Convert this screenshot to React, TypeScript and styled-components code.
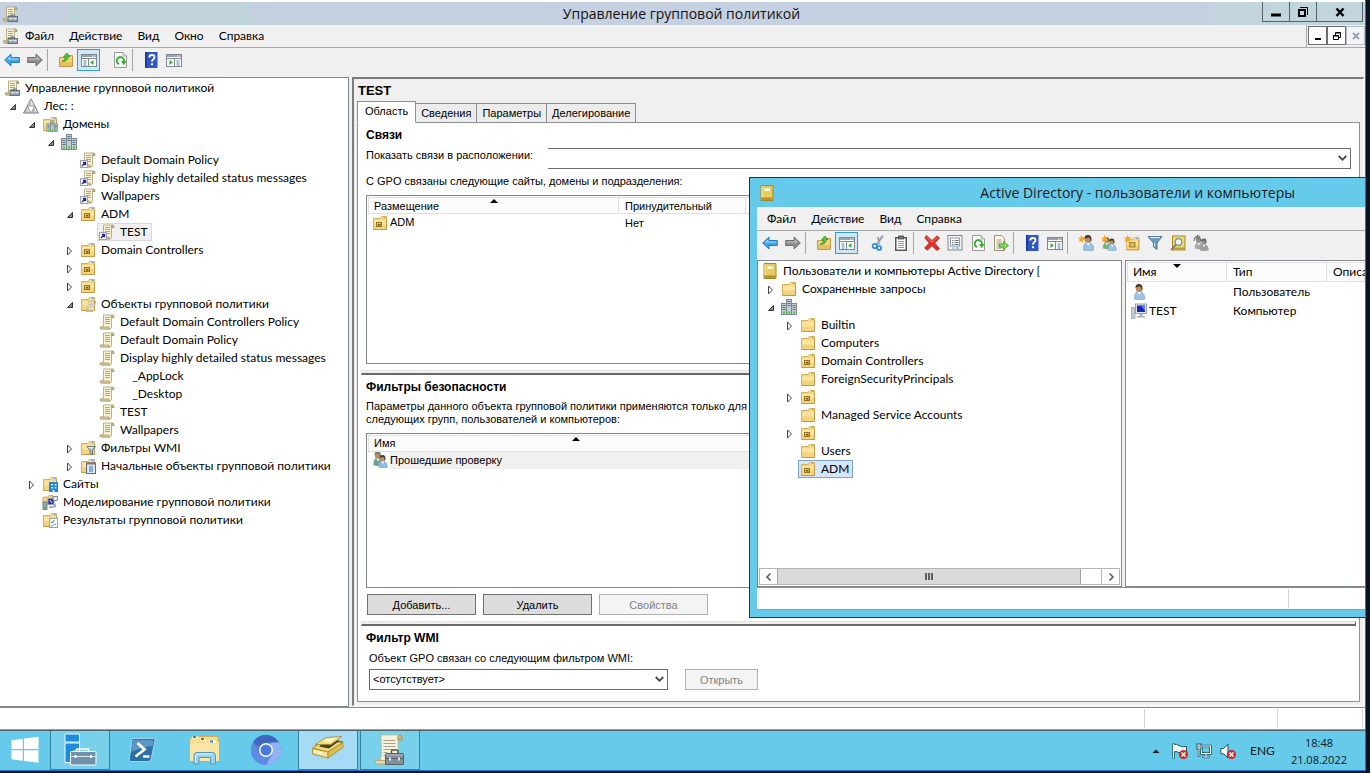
import React from 'react';
import styled, { createGlobalStyle, css } from 'styled-components';

const SEGOE = `Lato, 'Noto Sans', sans-serif`;
const SANS = `'Liberation Sans', Arial, sans-serif`;
const BLUE = '#66caea';

const Global = createGlobalStyle`
  *, *::before, *::after { box-sizing: border-box; }
  body { margin: 0; background: #0b1322; }
  button, select { font: inherit; color: inherit; margin: 0; }
`;

/* ---------- icons ---------- */

const Svg = styled.svg`
  display: block;
  flex: none;
`;

function Icon({ size = 16, box = 16, children }: { size?: number; box?: number; children: React.ReactNode }) {
  return (
    <Svg width={size} height={size} viewBox={`0 0 ${box} ${box}`} aria-hidden="true">
      {children}
    </Svg>
  );
}

const scrollShape = (
  <>
    <path d="M4.5 1 H13.5 Q15.3 1.2 14.8 3.500 H12.5 V13 Q12.500 15 10.500 15 H2.500 Q.8 15 1.300 13 H4 L4.500 11 Z" fill="#f8f2d2" stroke="#b3a981" strokeWidth=".9" />
    <path d="M12.500 3.500 Q12 1 13.500 1 Q15.300 1.300 14.800 3.500 Z" fill="#cdbf8a" stroke="#9a8f68" strokeWidth=".7" />
    <path d="M1.300 13 H10 Q9.800 15 11 15 H2.500 Q.8 15 1.300 13Z" fill="#ddd0a0" stroke="#a0946c" strokeWidth=".7" />
    <path d="M6 3.500h5M6 5.500h5M6 7.500h5M6 9.500h5" stroke="#9b98a8" strokeWidth=".9" />
  </>
);

const folderShape = (
  <>
    <path d="M1.500 3.500 H8 L9.500 1.500 H14.500 V14.500 H1.500 Z" fill="#f5d581" stroke="#d8b05c" />
    <path d="M9.500 2.500 H13.500" stroke="#fff4cc" />
    <path d="M11.500 2.500 H13.500" stroke="#5f9fd8" />
    <path d="M2 5 H14 V14 H2 Z" fill="#fbe3a0" />
    <path d="M2 9.500 H14 V14 H2 Z" fill="#f5d27e" />
    <path d="M1.500 14.500 H14.500 V4" stroke="#c39a4a" fill="none" />
  </>
);

const serverShape = (
  <>
    {[
      [0.5, 4.5],
      [10.5, 4.5],
      [5.5, 0.5],
    ].map(([x, y]) => (
      <g key={x}>
        <rect x={x} y={y} width="5" height={15.5 - y} fill="#c3ced6" stroke="#74838d" strokeWidth=".9" />
        <path d={`M${x + 1} ${y + 2}h3M${x + 1} ${y + 4}h3M${x + 1} ${y + 6}h3`} stroke="#56656f" strokeWidth=".9" />
        <rect x={x + 1.5} y="12.500" width="2" height="2" fill="#3bd01f" />
      </g>
    ))}
  </>
);

const GpoIcon = () => <Icon>{scrollShape}</Icon>;
const GpoLinkIcon = () => (
  <Icon>
    {scrollShape}
    <rect x=".5" y="8.500" width="7" height="7" fill="#fff" stroke="#9a9fb2" />
    <path d="M2 14 L5 11 M2.800 10.500 H5.500 V13.200" stroke="#26248c" strokeWidth="1.500" fill="none" />
  </Icon>
);
const toolboxShape = (
  <>
    <path d="M9 10.500 V9 H12.500 V10.500" fill="none" stroke="#5b6772" />
    <rect x="6" y="10.500" width="9.500" height="5" fill="#97a3ae" stroke="#5d6974" strokeWidth=".9" />
    <path d="M6.500 12.500 H15" stroke="#cfd7de" strokeWidth=".9" />
    <path d="M8.500 12v1.500M13 12v1.500" stroke="#eef2f5" />
  </>
);
const GpmcIcon = () => (
  <Icon>
    {scrollShape}
    {toolboxShape}
  </Icon>
);
const ForestIcon = () => (
  <Icon>
    <path d="M8 .8 L15.400 15 H.6 Z" fill="#dcdcdc" stroke="#7b7b7b" />
    <path d="M8 1 L11.700 8 H4.300 Z" fill="#f2f2f2" stroke="#8a8a8a" strokeWidth=".8" />
    <path d="M4.300 8 H11.700 L8 15 Z" fill="#fff" stroke="#8a8a8a" strokeWidth=".8" />
    <path d="M8 1 V8 L4.300 8 Z" fill="#b9b9b9" />
    <path d="M4.300 8.500 V15 H1 Z M11.700 8.500 V15 H8.400 Z" fill="#a9a9a9" opacity=".7" />
  </Icon>
);
const DomainIcon = () => <Icon>{serverShape}</Icon>;
const FolderIcon = () => <Icon>{folderShape}</Icon>;
const OuIcon = () => (
  <Icon>
    {folderShape}
    <rect x="4.500" y="7.500" width="5" height="4" fill="#e8c25a" stroke="#94731f" />
    <path d="M6 9 H8.500 V10.500 H6 Z" fill="#6e5312" />
  </Icon>
);
const DomainsFolderIcon = () => (
  <Icon>
    {folderShape}
    <g transform="translate(4.500 4.500) scale(.72)">{serverShape}</g>
  </Icon>
);
const GpoFolderIcon = () => (
  <Icon>
    {folderShape}
    <g transform="translate(5 4.500) scale(.72)">{scrollShape}</g>
  </Icon>
);
const WmiFolderIcon = () => (
  <Icon>
    {folderShape}
    <path d="M7 6.500 h8.500 l-3 4 v4.500 l-2.500 -1.500 v-3 z" fill="#a9bccb" stroke="#5d7485" strokeWidth=".9" />
    <path d="M8.500 7.800h5" stroke="#fff" />
  </Icon>
);
const StarterFolderIcon = () => (
  <Icon>
    {folderShape}
    <rect x="6.500" y="5" width="9" height="10.500" fill="#dfe9f3" stroke="#4b6b91" />
    <rect x="6" y="4.500" width="10" height="2" fill="#8d6f6a" />
    <path d="M9 9h4M9 11h4M9 13h4" stroke="#3f6aa5" />
  </Icon>
);
const SitesFolderIcon = () => (
  <Icon>
    {folderShape}
    <rect x="7" y="6" width="9" height="10" fill="#1f86cf" />
    <path d="M9 8h2v1.500H9zM12.500 8h2v1.500h-2zM9 11h2v1.500H9zM12.500 11h2v1.500h-2zM10.500 14h2v2h-2z" fill="#bfe4fa" />
  </Icon>
);
const ModelIcon = () => (
  <Icon>
    <path d="M1 3 H6 L7 1.500 H11 V9 H1 Z" fill="#f2d27e" stroke="#c9a24b" strokeWidth=".8" />
    <rect x="6" y="4.500" width="6" height="6" fill="#2433ae" stroke="#8f96a8" />
    <path d="M11 2.500h4.500v4H11z" fill="#dfe4ea" stroke="#6a7484" strokeWidth=".8" />
    <path d="M7 12h4v2H7zM11 9.500h3v4h-3z" fill="#aab1bd" />
    <rect x="1" y="8" width="4" height="7.500" fill="#9fa9b3" stroke="#5e6973" strokeWidth=".8" />
    <rect x="2" y="12.500" width="2" height="2" fill="#3bd01f" />
    <path d="M8 6 l2 3 M12 4 l2 1.500" stroke="#fff" strokeWidth=".9" />
  </Icon>
);
const ResultsIcon = () => (
  <Icon>
    {folderShape}
    <rect x="7.500" y="6.500" width="8" height="9" fill="#fff" stroke="#98a2ac" />
    <path d="M9 9.500 l1.200 1.500 l2 -3" stroke="#1c73c4" fill="none" />
    <path d="M9 13.500 l1 .8 1.500 -1.800 M12.500 12.500h1.500" stroke="#1c73c4" fill="none" strokeWidth=".8" />
  </Icon>
);

const BackIcon = () => (
  <Icon>
    <path d="M.7 8 L7 2 V5.500 H15.300 V10.500 H7 V14 Z" fill="#3fa5ea" stroke="#1b6fb8" strokeWidth=".9" />
    <path d="M3 7.600 L6.300 4.300 V6.500 H14.300 V7.600 Z" fill="#a4dbfb" />
  </Icon>
);
const ForwardIcon = () => (
  <Icon>
    <path d="M15.300 8 L9 2 V5.500 H.7 V10.500 H9 V14 Z" fill="#8f8f8f" stroke="#666" strokeWidth=".9" />
    <path d="M13 7.600 L9.700 4.300 V6.500 H1.700 V7.600 Z" fill="#c4c4c4" />
  </Icon>
);
const UpFolderIcon = () => (
  <Icon>
    <path d="M1.500 5.500 H9 L10.500 3.500 H14.500 V14.500 H1.500 Z" fill="#f3d27d" stroke="#c09a48" />
    <path d="M2 10h12v4H2z" fill="#eabf62" />
    <path d="M4 9.500 Q7.500 8.500 7.500 4.800 L5.500 5 L8.800 1 L12 4.500 L10 4.600 Q10 9.500 4 9.500Z" fill="#4ec636" stroke="#23891a" strokeWidth=".7" />
  </Icon>
);
const PaneIcon = ({ flip }: { flip?: boolean }) => (
  <Icon>
    <rect x=".5" y="2.500" width="15" height="12" fill="#fff" stroke="#7f8790" />
    <rect x="1" y="3" width="14" height="2" fill="#9aa3ad" />
    <path d="M11 4h1M13 4h1" stroke="#fff" />
    <path d="M1 6.500h14" stroke="#7f8790" />
    <g transform={flip ? 'translate(16 0) scale(-1 1)' : undefined}>
      <path d="M2.500 9h3M2.500 11h3M2.500 13h3" stroke="#5b7fae" />
      <path d="M7.500 7v7.500" stroke="#7f8790" />
      <path d="M12.500 8 V13 L9 10.500 Z" fill="#2fb32a" />
    </g>
  </Icon>
);
const RefreshIcon = () => (
  <Icon>
    <path d="M2.500 .5 H11 L14.500 4 V15.500 H2.500 Z" fill="#fbfbfb" stroke="#9a9a9a" />
    <path d="M11 .5 V4 H14.500" fill="#e3e3e3" stroke="#9a9a9a" strokeWidth=".8" />
    <path d="M7 12 A3.600 3.600 0 1 1 11.700 10" fill="none" stroke="#2fae2b" strokeWidth="1.900" />
    <path d="M9 9 h5.500 l-2.700 4.200 z" fill="#2fae2b" />
  </Icon>
);
const ExportIcon = () => (
  <Icon>
    <path d="M1.500 .5 H8.500 L11.500 3.500 V15.500 H1.500 Z" fill="#fdf9e4" stroke="#9c9678" />
    <path d="M3.500 5h5M3.500 7h5M3.500 9h3M3.500 11h3M3.500 13h5" stroke="#8e8e8e" strokeWidth=".9" />
    <path d="M6.500 8.800 H10.500 V6.500 L15.500 10.500 L10.500 14.500 V12.200 H6.500 Z" fill="#7ed957" stroke="#3c9b25" strokeWidth=".8" />
  </Icon>
);
const HelpIcon = () => (
  <Icon>
    <rect x="2" y="0" width="12.500" height="16" fill="#3157c0" />
    <rect x="2" y="0" width="2" height="16" fill="#1d3c97" />
    <path d="M6.300 5.500 Q6.300 3 8.900 3 Q11.500 3 11.500 5.200 Q11.500 6.600 10 7.500 Q9 8.200 9 9.800" fill="none" stroke="#fff" strokeWidth="1.800" />
    <rect x="8" y="11.200" width="2" height="2" fill="#fff" />
  </Icon>
);
const CutIcon = () => (
  <Icon>
    <path d="M12.800 .5 L6.500 10 M8 2 L9.500 9.500" stroke="#8a97a6" strokeWidth="1.600" />
    <path d="M13.800 1.500 L8 9.500" stroke="#c3ced9" strokeWidth="1" />
    <circle cx="4.800" cy="11" r="2.200" fill="none" stroke="#2d8edb" strokeWidth="1.700" />
    <circle cx="9.200" cy="13" r="2" fill="none" stroke="#2d8edb" strokeWidth="1.700" />
  </Icon>
);
const ClipboardIcon = () => (
  <Icon>
    <rect x="2.750" y="2.750" width="10.500" height="12.500" fill="#fff" stroke="#5a5a5a" strokeWidth="1.500" />
    <rect x="5.500" y="1" width="5" height="3" fill="#777" stroke="#444" strokeWidth=".8" />
    <path d="M5 6.500h6M5 8.500h6M5 10.500h6M5 12.500h6" stroke="#9a9a9a" />
  </Icon>
);
const DeleteIcon = () => (
  <Icon>
    <path d="M2.500 .5 L8 5.500 L13 .8 L15.500 3 L10.700 8 L15.500 13.500 L12.800 15.500 L8 10.700 L3.200 15.300 L.6 13 L5.300 8 L.8 3 Z" fill="#e0302a" stroke="#a51611" strokeWidth=".7" />
    <path d="M2.500 2 L8 7 L13 2.300" stroke="#f58d84" fill="none" strokeWidth=".8" />
  </Icon>
);
const PropertiesIcon = () => (
  <Icon>
    <rect x="1" y=".5" width="14" height="14.500" fill="#f3f3f3" stroke="#858585" />
    <rect x="3.500" y="3" width="9" height="8" fill="#fff" stroke="#8e9aa6" />
    <path d="M5 5.500h1.500M7.500 5.500h4M5 7.500h1.500M7.500 7.500h4M5 9.500h1.500M7.500 9.500h4" stroke="#69798a" />
    <path d="M5.500 13h2M9 13h3" stroke="#3aa6d9" />
  </Icon>
);
const personShape = (hair: string, body: string) => (
  <>
    <ellipse cx="8" cy="4.300" rx="3.200" ry="4" fill="#c08a5e" />
    <path d="M4.500 4 Q4.200 0 8 0 Q12 0 11.500 5.500 L10.300 7 Q11 3.500 9 2.500 Q6 2.500 4.500 4Z" fill={hair} />
    <path d="M6 7.500 h4 Q14 9.500 14 15 Q8 17 3.500 15 Q3 9.500 6 7.500Z" fill={body} stroke="#7f9dbb" strokeWidth=".6" />
    <path d="M6.500 8 L8.500 11 L9.800 8Z" fill="#fff" />
  </>
);
const star = <path d="M3.500 0 L4.500 2.300 L7 1.500 L5.800 3.700 L7.500 5.300 L5.200 5.500 L4.600 8 L3.200 5.900 L.8 6.800 L1.700 4.300 L0 2.700 L2.500 2.500 Z" fill="#f5a623" />;
const UserIcon = () => <Icon>{personShape('#4a3b31', '#9cc3e6')}</Icon>;
const NewUserIcon = () => (
  <Icon>
    <g transform="translate(2 0)">{personShape('#4a3b31', '#9cc3e6')}</g>
    {star}
  </Icon>
);
const NewGroupIcon = () => (
  <Icon>
    <g transform="translate(-.5 2) scale(.75)">{personShape('#4f6b52', '#79b36a')}</g>
    <g transform="translate(4.500 3.500) scale(.78)">{personShape('#4a3b31', '#9cc3e6')}</g>
    {star}
  </Icon>
);
const GrayPeople = styled.g`
  filter: grayscale(1);
`;
const AddToGroupIcon = () => (
  <Icon>
    <GrayPeople>
      <g transform="translate(-.5 2) scale(.75)">{personShape('#777', '#a9a9a9')}</g>
      <g transform="translate(4.500 3.500) scale(.78)">{personShape('#666', '#a0a0a0')}</g>
    </GrayPeople>
    <path d="M1 6 Q1 1.500 5 1.500 M4 0 L6.500 1.500 L4 3.500" fill="none" stroke="#7d7d7d" strokeWidth="1.300" />
  </Icon>
);
const GroupIcon = () => (
  <Icon>
    <g transform="translate(-1.500 -.5) scale(.9)">{personShape('#6f7f76', '#6fa58b')}</g>
    <g transform="translate(4 3) scale(.82)">{personShape('#3c3c3c', '#8dbdea')}</g>
  </Icon>
);
const NewOuIcon = () => (
  <Icon>
    <g transform="translate(1 1) scale(.95)">
      {folderShape}
      <rect x="5" y="7" width="5.500" height="4.500" fill="#e8c25a" stroke="#94731f" />
    </g>
    {star}
  </Icon>
);
const FilterIcon = () => (
  <Icon>
    <path d="M1 1.500 H15 L10 8 V14.500 L6.500 12 V8 Z" fill="#6f9cba" stroke="#456b86" strokeWidth=".9" />
    <path d="M3 2.500h10" stroke="#d8eaf5" strokeWidth="1.200" />
    <path d="M7.500 8v4" stroke="#cfe4f1" />
  </Icon>
);
const FindIcon = () => (
  <Icon>
    <rect x="2.500" y="1" width="12.500" height="14" fill="#eed873" stroke="#a58a28" />
    <path d="M3 13.500h12" stroke="#b59a35" strokeWidth="2" />
    <circle cx="8.500" cy="7" r="3.300" fill="#e5f3fb" stroke="#7c8d99" strokeWidth="1.200" />
    <path d="M6 9.500 L1 15" stroke="#6f7c86" strokeWidth="1.800" />
  </Icon>
);
const BookIcon = () => (
  <Icon>
    <path d="M2 .5 H14 V15.500 H2 Z" fill="#e9cd5c" stroke="#a48929" />
    <path d="M2.500 12.500 H13.500 V15 H2.500Z" fill="#b1932f" />
    <rect x="5" y="3" width="6.500" height="3.500" fill="#fffbe5" stroke="#d9c777" strokeWidth=".8" />
    <path d="M3 1.500 V12" stroke="#f9eeb0" />
  </Icon>
);
const ComputerIcon = () => (
  <Icon>
    <rect x=".5" y="4.500" width="3.500" height="11" fill="#c3cad1" stroke="#9fa7ae" strokeWidth=".8" />
    <rect x="4.500" y="1" width="11" height="9.500" fill="#e1e5e9" stroke="#99a2ab" />
    <rect x="6" y="2.500" width="8" height="6.500" fill="#1428b8" />
    <path d="M10 2.500 H14 V8 Z" fill="#5f7df0" />
    <path d="M8.500 11h3v2h2.500v1.500H6V13h2.500z" fill="#a9b1b9" />
  </Icon>
);
const Chevron = () => (
  <Svg width="9" height="7" viewBox="0 0 9 7" aria-hidden="true">
    <path d="M.8 1 L4.500 4.800 L8.200 1" fill="none" stroke="#444" strokeWidth="1.800" />
  </Svg>
);

/* ---------- shell ---------- */

const Screen = styled.div`
  position: relative;
  display: flex;
  flex-direction: column;
  height: calc(100vh - 2px);
  min-height: 560px;
  margin-right: 4px;
  padding-top: 2px;
  overflow: hidden;
  background: #fff;
  border-right: 1px solid #1b76c8;
  border-bottom: 1px solid #1b76c8;
  font: 12px/18px ${SEGOE};
  color: #000;
`;

const TitleBar = styled.header`
  display: flex;
  align-items: flex-start;
  height: 23px;
  flex: none;
  padding: 0 2px;
  background: linear-gradient(90deg, #c5d1e0 5%, #c0d4dc 5% 18.600%, #c5d1e0 18.600% 89%, #c1d5dc 89%);
`;
const TitleIcon = styled.span`
  padding-top: 4px;
`;
const TitleText = styled.h1`
  flex: 1;
  margin: 0;
  padding-left: 82px;
  font: 14px/23px 'Open Sans', sans-serif;
  text-align: center;
  color: #111;
`;
const CaptionButton = styled.button<{ $wide?: boolean }>`
  display: flex;
  align-items: center;
  justify-content: center;
  width: ${(p) => (p.$wide ? 47 : 28)}px;
  height: 20px;
  padding: 0;
  border: 1px solid #56626e;
  border-top: 0;
  margin-left: -1px;
  background: transparent;
`;
const MdiButtons = styled.div`
  display: flex;
  margin-left: auto;
  padding: 1px 0 0 1px;
  border-left: 1px solid #a9a9a9;
`;
const MdiButton = styled.button`
  display: flex;
  align-items: center;
  justify-content: center;
  width: 19px;
  height: 19px;
  padding: 0;
  border: 1px solid #6d6d6d;
  background: #fff;
  &:disabled { border-color: #b5bcc2; background: #f4f4f4; }
`;

const MenuBar = styled.nav`
  display: flex;
  flex: none;
  height: 23px;
  padding-left: 2px;
  background: #f0f0f0;
  border-bottom: 1px solid #a9a9a9;
`;
const MenuIcon = styled.span`
  padding: 3px 7px 0 0;
`;
const MenuItem = styled.button`
  padding: 0;
  margin-right: 15px;
  border: 0;
  background: none;
  line-height: 22px;
`;

const Toolbar = styled.div`
  display: flex;
  flex: none;
  align-items: flex-start;
  height: 29px;
  padding-top: 1px;
  background: #f0f0f0;
`;
const ToolButton = styled.button<{ $on?: boolean }>`
  display: flex;
  align-items: center;
  justify-content: center;
  width: 23px;
  height: 22px;
  padding: 0;
  border: 1px solid ${(p) => (p.$on ? '#2f9bdc' : 'transparent')};
  background: ${(p) => (p.$on ? '#cfe8f8' : 'none')};
`;
const ToolGap = styled.span<{ $line?: boolean }>`
  width: 8px;
  height: 22px;
  ${(p) => p.$line && css`background: linear-gradient(#a5a5a5, #a5a5a5) 1px 0 / 1px 100% no-repeat;`}
`;

const Workspace = styled.main`
  display: flex;
  flex: 1;
  min-height: 0;
  background: #f0f0f0;
`;

const StatusBar = styled.footer`
  display: flex;
  flex: none;
  justify-content: flex-end;
  height: 23px;
  padding: 1px 0;
  background: #fff;
  border-top: 1px solid #8c8c94;
  border-bottom: 1px solid #9a9a9a;
`;
const StatusPart = styled.span<{ $w: number }>`
  width: ${(p) => p.$w}px;
  border-left: 1px solid #d5d5d5;
`;

/* ---------- tree ---------- */

const TreePane = styled.section<{ $basis: string; $framed?: boolean }>`
  display: flex;
  flex-direction: column;
  flex: none;
  width: ${(p) => p.$basis};
  padding-top: 1px;
  background: #fff;
  border: solid #828790;
  border-width: 1px 1px 1px ${(p) => (p.$framed ? 1 : 0)}px;
  overflow: hidden;
`;
const TreeList = styled.ul`
  flex: 1;
  min-height: 0;
  margin: 0;
  padding: 0 0 0 2px;
  list-style: none;
  overflow: hidden;
`;
const TreeRow = styled.li<{ $level: number }>`
  display: flex;
  height: 18px;
  padding-left: ${(p) => Math.max(0, p.$level - 1) * 19}px;
`;
const Expander = styled.button`
  display: flex;
  align-items: center;
  justify-content: center;
  width: 19px;
  height: 18px;
  padding: 2px 0 0 2px;
  border: 0;
  background: none;
`;
const ExpanderSpace = styled.span`
  width: 19px;
`;
const Node = styled.button<{ $sel?: 'gray' | 'blue' }>`
  display: flex;
  align-items: center;
  gap: 5px;
  height: 18px;
  padding: 0 3px 0 1px;
  border: 1px solid ${(p) => (p.$sel === 'blue' ? '#7da2ce' : p.$sel ? '#d9d9d9' : 'transparent')};
  background: ${(p) => (p.$sel === 'blue' ? '#d5e6fb' : p.$sel ? '#f0f0f0' : 'none')};
  line-height: 16px;
  white-space: pre;
`;

type TreeNode = { level: number; label: string; icon: React.ReactNode; open?: boolean; sel?: 'gray' | 'blue' };

function Tree({ nodes }: { nodes: TreeNode[] }) {
  return (
    <TreeList>
      {nodes.map((n, i) => (
        <TreeRow key={i} $level={n.level}>
          {n.level > 0 &&
            (n.open === undefined ? (
              <ExpanderSpace />
            ) : (
              <Expander aria-label={n.open ? 'Свернуть' : 'Развернуть'}>
                <Svg width="8" height="10" viewBox="0 0 8 10" aria-hidden="true">
                  {n.open ? <path d="M6.500 2.500 V7.500 H1.500 Z" fill="#8a8a8a" stroke="#333" /> : <path d="M1.500 1 L5.500 5 L1.500 9 Z" fill="#fff" stroke="#444" />}
                </Svg>
              </Expander>
            ))}
          <Node $sel={n.sel}>
            {n.icon}
            {n.label && <span>{n.label}</span>}
          </Node>
        </TreeRow>
      ))}
    </TreeList>
  );
}

const policyTree: TreeNode[] = [
  { level: 0, label: 'Управление групповой политикой', icon: <GpmcIcon /> },
  { level: 1, label: 'Лес: :', icon: <ForestIcon />, open: true },
  { level: 2, label: 'Домены', icon: <DomainsFolderIcon />, open: true },
  { level: 3, label: '', icon: <DomainIcon />, open: true },
  { level: 4, label: 'Default Domain Policy', icon: <GpoLinkIcon /> },
  { level: 4, label: 'Display highly detailed status messages', icon: <GpoLinkIcon /> },
  { level: 4, label: 'Wallpapers', icon: <GpoLinkIcon /> },
  { level: 4, label: 'ADM', icon: <OuIcon />, open: true },
  { level: 5, label: 'TEST', icon: <GpoLinkIcon />, sel: 'gray' },
  { level: 4, label: 'Domain Controllers', icon: <OuIcon />, open: false },
  { level: 4, label: '', icon: <OuIcon />, open: false },
  { level: 4, label: '', icon: <OuIcon />, open: false },
  { level: 4, label: 'Объекты групповой политики', icon: <GpoFolderIcon />, open: true },
  { level: 5, label: 'Default Domain Controllers Policy', icon: <GpoIcon /> },
  { level: 5, label: 'Default Domain Policy', icon: <GpoIcon /> },
  { level: 5, label: 'Display highly detailed status messages', icon: <GpoIcon /> },
  { level: 5, label: '    _AppLock', icon: <GpoIcon /> },
  { level: 5, label: '    _Desktop', icon: <GpoIcon /> },
  { level: 5, label: 'TEST', icon: <GpoIcon /> },
  { level: 5, label: 'Wallpapers', icon: <GpoIcon /> },
  { level: 4, label: 'Фильтры WMI', icon: <WmiFolderIcon />, open: false },
  { level: 4, label: 'Начальные объекты групповой политики', icon: <StarterFolderIcon />, open: false },
  { level: 2, label: 'Сайты', icon: <SitesFolderIcon />, open: false },
  { level: 2, label: 'Моделирование групповой политики', icon: <ModelIcon /> },
  { level: 2, label: 'Результаты групповой политики', icon: <ResultsIcon /> },
];

const directoryTree: TreeNode[] = [
  { level: 0, label: 'Пользователи и компьютеры Active Directory [', icon: <BookIcon /> },
  { level: 1, label: 'Сохраненные запросы', icon: <FolderIcon />, open: false },
  { level: 1, label: '', icon: <DomainIcon />, open: true },
  { level: 2, label: 'Builtin', icon: <FolderIcon />, open: false },
  { level: 2, label: 'Computers', icon: <FolderIcon /> },
  { level: 2, label: 'Domain Controllers', icon: <OuIcon /> },
  { level: 2, label: 'ForeignSecurityPrincipals', icon: <FolderIcon /> },
  { level: 2, label: '', icon: <OuIcon />, open: false },
  { level: 2, label: 'Managed Service Accounts', icon: <FolderIcon /> },
  { level: 2, label: '', icon: <OuIcon />, open: false },
  { level: 2, label: 'Users', icon: <FolderIcon /> },
  { level: 2, label: 'ADM', icon: <OuIcon />, sel: 'blue' },
];

/* ---------- policy details ---------- */

const Details = styled.section`
  display: flex;
  flex-direction: column;
  flex: 1;
  min-width: 0;
  margin: 0 1px 1px 3px;
  padding: 2px 3px 3px 3px;
  border: solid;
  border-width: 2px 1px 1px 2px;
  border-color: #7c7c7c #fff #fff #7c7c7c;
  font: 11px/14px ${SANS};
`;
const DetailsTitle = styled.h2`
  margin: 0;
  padding-left: 1px;
  font: bold 13px/20px ${SANS};
`;
const Tabs = styled.div`
  display: flex;
  align-items: flex-end;
  height: 21px;
`;
const Tab = styled.button<{ $on?: boolean }>`
  position: relative;
  z-index: ${(p) => (p.$on ? 1 : 0)};
  height: ${(p) => (p.$on ? 22 : 19)}px;
  padding: ${(p) => (p.$on ? '0 7px 2px' : '0 5px')};
  margin-bottom: ${(p) => (p.$on ? -1 : 0)}px;
  margin-left: ${(p) => (p.$on ? 0 : -1)}px;
  border: 1px solid #8c8e96;
  border-bottom-color: ${(p) => (p.$on ? '#fff' : '#8c8e96')};
  ${(p) => !p.$on && css`border-bottom: 0;`}
  background: ${(p) => (p.$on ? '#fff' : '#ececec')};
`;
const TabPage = styled.div`
  display: flex;
  flex-direction: column;
  flex: 1;
  min-height: 0;
  padding: 0 3px;
  background: #fff;
  border: 1px solid #8c8e96;
`;
const Block = styled.section<{ $grow?: boolean }>`
  display: flex;
  flex-direction: column;
  flex: ${(p) => (p.$grow ? '1 1 0' : 'none')};
  min-height: 0;
  padding: 4px 5px 6px;
`;
const BlockTitle = styled.h3`
  margin: 0 0 5px;
  font: bold 12px/16px ${SANS};
`;
const Splitter = styled.hr`
  flex: none;
  width: 100%;
  height: 5px;
  margin: 0;
  border: solid;
  border-width: 1px 1px 2px 1px;
  border-color: #e3e3e3 #696969 #696969 #e3e3e3;
  background: #f0f0f0;
`;
const Row = styled.div<{ $gap?: number }>`
  display: flex;
  gap: ${(p) => p.$gap ?? 0}px;
`;
const ButtonRow = styled(Row)`
  gap: 7px;
  padding: 6px 1px 0;
`;
const ScopeLabel = styled.label`
  width: 182px;
`;
const ScopeRow = styled(Row)`
  padding-bottom: 6px;
`;
const Note = styled.p`
  margin: 0 0 7px;
  line-height: 13px;
`;
const SelectBox = styled.span<{ $w?: number; $open?: boolean }>`
  position: relative;
  display: flex;
  flex: ${(p) => (p.$w ? 'none' : 1)};
  width: ${(p) => (p.$w ? p.$w + 'px' : 'auto')};
  select {
    width: 100%;
    height: 21px;
    padding: 0 3px;
    appearance: none;
    background: #fff;
    border: 1px solid #6c6c6c;
    border-left-width: ${(p) => (p.$open ? 0 : 1)}px;
    border-radius: 0;
    font: 11px/17px ${SANS};
  }
  svg {
    position: absolute;
    right: 4px;
    top: 7px;
    pointer-events: none;
  }
`;
const PushButton = styled.button<{ $w: number }>`
  width: ${(p) => p.$w}px;
  height: 21px;
  padding: 0;
  border: 1px solid #707070;
  background: #dddddd;
  &:disabled { border-color: #adb2b5; background: #f4f4f4; color: #838383; }
`;
const WmiBody = styled.div`
  padding: 0 3px 5px;
  label { display: block; margin-bottom: 4px; }
`;

const ListView = styled.div`
  flex: 1;
  min-height: 0;
  padding: 1px;
  overflow: hidden;
  background: #fff;
  border: 1px solid #828790;
`;
const Table = styled.table<{ $row: number; $head: number }>`
  width: 100%;
  table-layout: fixed;
  border-collapse: separate;
  border-spacing: 0;
  text-align: left;
  white-space: nowrap;
  th, td { height: ${(p) => p.$row}px; padding: 0 0 0 6px; font-weight: 400; }
  th { position: relative; height: ${(p) => p.$head}px; border: solid #e0e0e0; border-width: 1px 1px 1px 0; background: #fcfcfc; line-height: 14px; }
  th:first-child { border-left-width: 1px; padding-left: 5px; }
  th svg { position: absolute; top: 1px; left: calc(50% - 4px); }
`;
const Col = styled.col<{ $w?: number }>`
  width: ${(p) => (p.$w ? p.$w + 'px' : 'auto')};
`;
const Cell = styled.div<{ $hot?: boolean }>`
  display: flex;
  align-items: center;
  gap: 2px;
  margin-left: -2px;
  span { flex: 1; line-height: 17px; ${(p) => p.$hot && css`background: #f0f0f0;`} }
`;
const SortMark = ({ down }: { down?: boolean }) => (
  <Svg width="8" height="4" viewBox="0 0 8 4" aria-hidden="true">
    <path d={down ? 'M0 0 H8 L4 4Z' : 'M0 4 H8 L4 0Z'} />
  </Svg>
);

/* ---------- directory window ---------- */

const DirectoryWindow = styled.section`
  position: absolute;
  left: 749px;
  right: 0;
  top: 177px;
  height: 441px;
  display: flex;
  flex-direction: column;
  padding: 0 0 7px 7px;
  overflow: hidden;
  background: ${BLUE};
  border: 1px solid #26343c;
  border-right: 0;
`;
const DirectoryTitle = styled.header`
  display: flex;
  flex: none;
  align-items: center;
  height: 29px;
  padding: 0 70px 0 2px;
  h2 { flex: 1; margin: 0; font: 14px/29px 'Open Sans', sans-serif; text-align: right; color: #1a1a1a; white-space: nowrap; }
`;
const DirectoryMenu = styled(MenuBar)`
  height: 24px;
  padding-left: 10px;
`;
const DirectoryTools = styled(Toolbar)`
  padding-left: 1px;
`;
const ListPane = styled.div`
  flex: 1;
  min-width: 0;
  margin-left: 3px;
  padding: 1px 0 0 1px;
  overflow: hidden;
  background: #fff;
  border: 1px solid #828790;
  border-right: 0;
`;
const ScrollBar = styled.div`
  display: flex;
  flex: none;
  height: 17px;
  margin: 0 1px 1px;
  border: 1px solid #b5b5b5;
  button { width: 17px; padding: 0; border: 0; background: #fff; display: flex; align-items: center; justify-content: center; }
`;
const Thumb = styled.div`
  display: flex;
  flex: 15;
  align-items: center;
  justify-content: center;
  gap: 1px;
  background: #dadada;
  border: 1px solid #a3a3a3;
  border-width: 0 1px;
  i { width: 2px; height: 7px; background: #5f5f5f; }
`;
const Track = styled.div`
  flex: 1;
  border-right: 1px solid #b5b5b5;
`;

/* ---------- taskbar ---------- */

const TaskBar = styled.nav`
  display: flex;
  flex: none;
  height: 40px;
  background: ${BLUE};
  border-top: 1px solid #4d6770;
`;
const TaskButton = styled.button<{ $state?: 'run' | 'active' | 'start' }>`
  display: flex;
  align-items: center;
  justify-content: center;
  width: ${(p) => (p.$state === 'start' ? 50 : 60)}px;
  margin-right: ${(p) => (p.$state === 'start' ? 0 : 2)}px;
  padding: 0;
  border: 1px solid ${(p) => (p.$state === 'run' || p.$state === 'active' ? '#3c7f98' : 'transparent')};
  border-top: 0;
  background: ${(p) => (p.$state === 'active' ? '#a5dbf5' : p.$state === 'run' ? '#78d0eb' : 'none')};
`;
const Tray = styled.div`
  display: flex;
  align-items: center;
  gap: 8px;
  margin-left: auto;
  padding-right: 18px;
  color: #10181c;
  button { padding: 0; border: 0; background: none; }
`;
const Language = styled.span`
  margin: 0 8px 0 6px;
`;
const Clock = styled.time`
  text-align: center;
  font: 11px/17px 'Open Sans', sans-serif;
`;

const StartLogo = () => (
  <Icon size={28} box={28}>
    <path d="M.5 4.200 L11.800 2.700 V13 H.5 Z M13 2.500 L27.500 .8 V13 H13 Z M.5 14.200 H11.800 V24.800 L.5 23.200 Z M13 14.200 H27.500 V26.800 L13 25 Z" fill="#fff" />
  </Icon>
);
const ServerManagerLogo = () => (
  <Icon size={34} box={34}>
    <path d="M2 1 H16.500 V9 H2 Z M2 10 H16.500 V18 H10 V29.500 H2 Z" fill="#1f8bdc" stroke="#e9f7fd" />
    <path d="M13.500 18.500 V16 H25.500 V18.500" fill="none" stroke="#fff" strokeWidth="1.500" />
    <rect x="7.500" y="18.500" width="25.500" height="13.500" rx="1" fill="#7191a9" stroke="#fff" />
    <path d="M8 23.500h25" stroke="#dbe7ee" />
    <path d="M12.500 22v3M28 22v3" stroke="#fff" strokeWidth="2" />
  </Icon>
);
const PowerShellLogo = () => (
  <Icon size={30} box={30}>
    <path d="M6 3.500 H27 Q28.500 3.500 28 5.500 L24 24.500 Q23.500 26.500 21.500 26.500 H3.500 Q1.800 26.500 2.200 24.500 L5 5 Q5.200 3.500 6 3.500Z" fill="#2d6fa8" stroke="#a7d3ee" />
    <path d="M6 5 H26.500 L25.500 11 Q15 12 4 17 Z" fill="#6fa9d4" opacity=".7" />
    <path d="M10.500 8 L17.500 14.500 L8.500 21.500" fill="none" stroke="#fff" strokeWidth="2.800" />
    <path d="M16 21.500h6.500" stroke="#fff" strokeWidth="2.400" />
  </Icon>
);
const ExplorerLogo = () => (
  <Icon size={34} box={34}>
    <path d="M2.500 5 H10 L11.500 3.500 H31 V8 H32.500 V28.500 H2.500 Z" fill="#f6dd8c" stroke="#d3ad51" />
    <path d="M5 4.500h6M13 6.500h6M22 8.500h7" stroke="#fff" strokeWidth="2" />
    <path d="M6 4h3" stroke="#35a83a" strokeWidth="2" />
    <path d="M14 6h3" stroke="#d9442f" strokeWidth="2" />
    <path d="M23 8.500h3" stroke="#2d8bd9" strokeWidth="2" />
    <path d="M3 10.500 H32 V28 H3 Z" fill="#fae6a4" />
    <path d="M7 31 V22.500 Q7 19.500 10 19.500 H25.500 Q28.500 19.500 28.500 22.500 V31 H23.500 V24.500 H12 V31 Z" fill="#9bd3ee" stroke="#5297bd" />
    <path d="M8.500 29 V23 Q8.500 21 10.500 21 H25" fill="none" stroke="#e2f5fd" />
  </Icon>
);
const ChromiumLogo = () => (
  <Icon size={32} box={32}>
    <circle cx="16" cy="16" r="15" fill="#5580dc" />
    <path d="M16 16 L3 8.500 A15 15 0 0 1 29 8.500 H16 Z" fill="#3f66bd" />
    <path d="M29 8.500 A15 15 0 0 1 16 31 L22.500 19.700 L21 10 V8.500 Z" fill="#8fb4f3" />
    <path d="M3 8.500 A15 15 0 0 0 16 31 L21 21 L9.500 19.700 Z" fill="#5f8be4" />
    <circle cx="16" cy="16" r="7" fill="#fff" />
    <circle cx="16" cy="16" r="5.500" fill="#4a7ae0" />
  </Icon>
);
const DirectoryLogo = () => (
  <Icon size={34} box={34}>
    <path d="M1.500 15 L12 8 L32 8 V14 L17 25 L1.500 21 Z" fill="#8c7826" />
    <path d="M1.500 15 L13 8 L32 9.500 L17 19 Z" fill="#efd877" stroke="#a58a28" strokeWidth=".8" />
    <path d="M8 13.500 L15 7 L29 7.500 L18 15.500 Z" fill="#4c4420" />
    <path d="M4 11.500 L15 4.500 L31 3.500 L20 11.500 Z" fill="#f3dd80" stroke="#a58a28" strokeWidth=".8" />
    <path d="M15 5.500 L26 4.800 L20 9 L13 9.500 Z" fill="#fdf5c0" />
    <path d="M1.500 15.500 L17 19 V25 L1.500 21 Z" fill="#f3e39b" stroke="#a58a28" strokeWidth=".8" />
    <path d="M17 19 L32 9.500 V14.500 L17 25 Z" fill="#d9bf55" stroke="#a58a28" strokeWidth=".8" />
    <path d="M4 18.500 L11 20.200" stroke="#fffbe0" strokeWidth="1.500" />
  </Icon>
);
const PolicyLogo = () => (
  <Icon size={34} box={34}>
    <path d="M8 2 H26 Q30 2 29 7 H25 V28 Q25 31 22 31 H4 Q1.500 31 2.500 27.500 H7.500 Q8.500 24 8.500 16 Z" fill="#f9f3d6" stroke="#cbbb84" strokeWidth=".8" />
    <path d="M25 7 Q24 2 27 2 Q30 2.500 29 7 Z" fill="#c9b473" stroke="#a58f50" strokeWidth=".8" />
    <path d="M2.500 27.500 H20 Q19.500 31 22 31 H4 Q1.500 31 2.500 27.500Z" fill="#e5d8a5" stroke="#b5a56c" strokeWidth=".8" />
    <path d="M10.500 7.500h12M10.500 10.500h12M10.500 13.500h12M10.500 16.500h10M10.500 19.500h4M10.500 22.500h2" stroke="#a4a0a0" />
    <path d="M18.500 20.500 V18 Q18.500 17 19.500 17 H24 Q25 17 25 18 V20.500" fill="none" stroke="#4c545c" strokeWidth="1.500" />
    <path d="M12.500 21.500 Q12.500 20.500 13.500 20.500 H29.500 Q30.500 20.500 30.500 21.500 V31.500 H12.500 Z" fill="#84909b" stroke="#55606a" />
    <path d="M13 25.500 H30" stroke="#59636d" />
    <path d="M13 22 H30" stroke="#b4bec7" />
    <path d="M17 24.500v3M26 24.500v3" stroke="#dfe5ea" strokeWidth="2" />
  </Icon>
);
const trayError = (
  <>
    <circle cx="11.500" cy="11.500" r="4.300" fill="#d92b22" stroke="#a11" strokeWidth=".5" />
    <path d="M9.500 9.500 L13.500 13.500 M13.500 9.500 L9.500 13.500" stroke="#fff" strokeWidth="1.500" />
  </>
);
const TrayFlag = () => (
  <Icon>
    <path d="M1.500 .5 V15.500" stroke="#25505f" strokeWidth="2.400" />
    <path d="M1.500 1.500 Q4.500 .5 7 2.500 Q10 4.500 14.500 3.500 V10 Q10 11 7 9.500 Q4.500 8 1.500 9Z" fill="#f3fafd" stroke="#25505f" />
    <path d="M1.500 1 V15" stroke="#fff" />
    {trayError}
  </Icon>
);
const TrayNetwork = () => (
  <Icon>
    <rect x="5.500" y="3" width="9" height="7.500" fill="#66caea" stroke="#1e4c5c" strokeWidth="2.400" />
    <rect x="5.500" y="3" width="9" height="7.500" fill="none" stroke="#fff" />
    <path d="M10 11.500v2M6.500 14h7" stroke="#1e4c5c" strokeWidth="2.400" />
    <path d="M10 11v3M7 14h6" stroke="#fff" />
    <path d="M3 6v8" stroke="#1e4c5c" strokeWidth="2.400" />
    <rect x="1" y="1" width="4" height="5" fill="#fff" stroke="#1e4c5c" />
    <path d="M3 5.500v8" stroke="#fff" />
    <path d="M3 2.500v2" stroke="#1e4c5c" />
  </Icon>
);
const TraySound = () => (
  <Icon>
    <path d="M.8 5.500 H3.500 L8 1.200 V14.800 L3.500 10.800 H.8 Z" fill="#f3fafd" stroke="#25505f" />
    {trayError}
  </Icon>
);

/* ---------- page ---------- */

export default function App() {
  return (
    <>
      <Global />
      <Screen>
        <TitleBar>
          <TitleIcon><GpmcIcon /></TitleIcon>
          <TitleText>Управление групповой политикой</TitleText>
          <CaptionButton aria-label="Свернуть">
            <Icon><path d="M3 11h10" stroke="#000" strokeWidth="3" /></Icon>
          </CaptionButton>
          <CaptionButton aria-label="Восстановить">
            <Icon><path d="M4 6h6v6H4z" fill="none" stroke="#000" strokeWidth="2" /><path d="M5 3.500h7.500v7.500" fill="none" stroke="#000" /></Icon>
          </CaptionButton>
          <CaptionButton $wide aria-label="Закрыть">
            <Icon><path d="M4.500 4.500 L11.500 12 M11.500 4.500 L4.500 12" stroke="#000" strokeWidth="2.400" /></Icon>
          </CaptionButton>
        </TitleBar>

        <MenuBar>
          <MenuIcon><GpmcIcon /></MenuIcon>
          {['Файл', 'Действие', 'Вид', 'Окно', 'Справка'].map((m) => (
            <MenuItem key={m}>{m}</MenuItem>
          ))}
          <MdiButtons>
            <MdiButton aria-label="Свернуть окно">
              <Icon><path d="M5 11h6" stroke="#000" strokeWidth="2" /></Icon>
            </MdiButton>
            <MdiButton aria-label="Восстановить окно">
              <Icon><path d="M4.500 7.500h5v4h-5zM4 8h6" fill="none" stroke="#000" /><path d="M6.500 7V4.500h5v5H10M6 5h6" fill="none" stroke="#000" /></Icon>
            </MdiButton>
            <MdiButton disabled aria-label="Закрыть окно">
              <Icon><path d="M5 5 L11 11 M11 5 L5 11" stroke="#94a3b0" strokeWidth="2" /></Icon>
            </MdiButton>
          </MdiButtons>
        </MenuBar>

        <Toolbar>
          <ToolButton aria-label="Назад"><BackIcon /></ToolButton>
          <ToolButton aria-label="Вперед"><ForwardIcon /></ToolButton>
          <ToolGap $line />
          <ToolButton aria-label="Вверх"><UpFolderIcon /></ToolButton>
          <ToolButton $on aria-label="Дерево консоли"><PaneIcon /></ToolButton>
          <ToolGap />
          <ToolButton aria-label="Обновить"><RefreshIcon /></ToolButton>
          <ToolGap $line />
          <ToolButton aria-label="Справка"><HelpIcon /></ToolButton>
          <ToolButton aria-label="Панель действий"><PaneIcon flip /></ToolButton>
        </Toolbar>

        <Workspace>
          <TreePane $basis="349px">
            <Tree nodes={policyTree} />
          </TreePane>

          <Details>
            <DetailsTitle>TEST</DetailsTitle>
            <Tabs role="tablist">
              <Tab $on role="tab">Область</Tab>
              <Tab role="tab">Сведения</Tab>
              <Tab role="tab">Параметры</Tab>
              <Tab role="tab">Делегирование</Tab>
            </Tabs>
            <TabPage>
              <Block $grow>
                <BlockTitle>Связи</BlockTitle>
                <ScopeRow>
                  <ScopeLabel htmlFor="scope">Показать связи в расположении:</ScopeLabel>
                  <SelectBox $open>
                    <select id="scope"><option></option></select>
                    <Chevron />
                  </SelectBox>
                </ScopeRow>
                <Note>С GPO связаны следующие сайты, домены и подразделения:</Note>
                <ListView>
                  <Table $row={17} $head={17}>
                    <colgroup><Col $w={251} /><Col $w={127} /><Col /></colgroup>
                    <thead>
                      <tr><th>Размещение<SortMark /></th><th>Принудительный</th><th></th></tr>
                    </thead>
                    <tbody>
                      <tr><td><Cell><OuIcon /><span>ADM</span></Cell></td><td>Нет</td><td></td></tr>
                    </tbody>
                  </Table>
                </ListView>
              </Block>
              <Splitter />
              <Block $grow>
                <BlockTitle>Фильтры безопасности</BlockTitle>
                <Note>
                  Параметры данного объекта групповой политики применяются только для
                  <br />
                  следующих групп, пользователей и компьютеров:
                </Note>
                <ListView>
                  <Table $row={17} $head={17}>
                    <colgroup><Col $w={416} /><Col /></colgroup>
                    <thead>
                      <tr><th>Имя<SortMark /></th><th></th></tr>
                    </thead>
                    <tbody>
                      <tr><td><Cell $hot><GroupIcon /><span>Прошедшие проверку</span></Cell></td><td></td></tr>
                    </tbody>
                  </Table>
                </ListView>
                <ButtonRow $gap={7}>
                  <PushButton $w={109}>Добавить...</PushButton>
                  <PushButton $w={109}>Удалить</PushButton>
                  <PushButton $w={109} disabled>Свойства</PushButton>
                </ButtonRow>
              </Block>
              <Splitter />
              <Block>
                <BlockTitle>Фильтр WMI</BlockTitle>
                <WmiBody>
                  <label htmlFor="wmi">Объект GPO связан со следующим фильтром WMI:</label>
                  <Row $gap={17}>
                    <SelectBox $w={299}>
                      <select id="wmi"><option>&lt;отсутствует&gt;</option></select>
                      <Chevron />
                    </SelectBox>
                    <PushButton $w={73} disabled>Открыть</PushButton>
                  </Row>
                </WmiBody>
              </Block>
            </TabPage>
          </Details>
        </Workspace>

        <StatusBar>
          <StatusPart $w={133} />
          <StatusPart $w={85} />
          <StatusPart $w={3} />
        </StatusBar>

        <TaskBar>
          <TaskButton $state="start" aria-label="Пуск"><StartLogo /></TaskButton>
          <TaskButton $state="run" aria-label="Диспетчер серверов"><ServerManagerLogo /></TaskButton>
          <TaskButton aria-label="PowerShell"><PowerShellLogo /></TaskButton>
          <TaskButton aria-label="Проводник"><ExplorerLogo /></TaskButton>
          <TaskButton aria-label="Chromium"><ChromiumLogo /></TaskButton>
          <TaskButton $state="active" aria-label="Active Directory"><DirectoryLogo /></TaskButton>
          <TaskButton $state="run" aria-label="Групповая политика"><PolicyLogo /></TaskButton>
          <Tray>
            <button aria-label="Скрытые значки"><Icon><path d="M4.500 10 H11.500 L8 6.500 Z" fill="#10181c" /></Icon></button>
            <TrayFlag />
            <TrayNetwork />
            <TraySound />
            <Language>ENG</Language>
            <Clock>18:48<br />21.08.2022</Clock>
          </Tray>
        </TaskBar>

        <DirectoryWindow>
          <DirectoryTitle>
            <BookIcon />
            <h2>Active Directory - пользователи и компьютеры</h2>
          </DirectoryTitle>
          <DirectoryMenu>
            {['Файл', 'Действие', 'Вид', 'Справка'].map((m) => (
              <MenuItem key={m}>{m}</MenuItem>
            ))}
          </DirectoryMenu>
          <DirectoryTools>
            <ToolButton aria-label="Назад"><BackIcon /></ToolButton>
            <ToolButton aria-label="Вперед"><ForwardIcon /></ToolButton>
            <ToolGap $line />
            <ToolButton aria-label="Вверх"><UpFolderIcon /></ToolButton>
            <ToolButton $on aria-label="Дерево консоли"><PaneIcon /></ToolButton>
            <ToolGap />
            <ToolButton aria-label="Вырезать"><CutIcon /></ToolButton>
            <ToolButton aria-label="Вставить"><ClipboardIcon /></ToolButton>
            <ToolGap $line />
            <ToolButton aria-label="Удалить"><DeleteIcon /></ToolButton>
            <ToolButton aria-label="Свойства"><PropertiesIcon /></ToolButton>
            <ToolButton aria-label="Обновить"><RefreshIcon /></ToolButton>
            <ToolButton aria-label="Экспорт"><ExportIcon /></ToolButton>
            <ToolGap $line />
            <ToolButton aria-label="Справка"><HelpIcon /></ToolButton>
            <ToolButton aria-label="Панель действий"><PaneIcon flip /></ToolButton>
            <ToolGap $line />
            <ToolButton aria-label="Новый пользователь"><NewUserIcon /></ToolButton>
            <ToolButton aria-label="Новая группа"><NewGroupIcon /></ToolButton>
            <ToolButton aria-label="Новое подразделение"><NewOuIcon /></ToolButton>
            <ToolButton aria-label="Фильтр"><FilterIcon /></ToolButton>
            <ToolButton aria-label="Поиск"><FindIcon /></ToolButton>
            <ToolButton aria-label="Добавить в группу"><AddToGroupIcon /></ToolButton>
          </DirectoryTools>
          <Workspace>
            <TreePane $basis="365px" $framed>
              <Tree nodes={directoryTree} />
              <ScrollBar>
                <button aria-label="Влево"><Icon><path d="M9.500 4.500 L6 8 L9.500 11.500" fill="none" stroke="#555" strokeWidth="1.500" /></Icon></button>
                <Thumb><i /><i /><i /></Thumb>
                <Track />
                <button aria-label="Вправо"><Icon><path d="M6.500 4.500 L10 8 L6.500 11.500" fill="none" stroke="#555" strokeWidth="1.500" /></Icon></button>
              </ScrollBar>
            </TreePane>
            <ListPane>
              <Table $row={19} $head={20}>
                <colgroup><Col $w={100} /><Col $w={100} /><Col /></colgroup>
                <thead>
                  <tr><th>Имя<SortMark down /></th><th>Тип</th><th>Описа</th></tr>
                </thead>
                <tbody>
                  <tr><td><Cell><UserIcon /></Cell></td><td>Пользователь</td><td></td></tr>
                  <tr><td><Cell><ComputerIcon /><span>TEST</span></Cell></td><td>Компьютер</td><td></td></tr>
                </tbody>
              </Table>
            </ListPane>
          </Workspace>
          <StatusBar>
            <StatusPart $w={77} />
          </StatusBar>
        </DirectoryWindow>
      </Screen>
    </>
  );
}
